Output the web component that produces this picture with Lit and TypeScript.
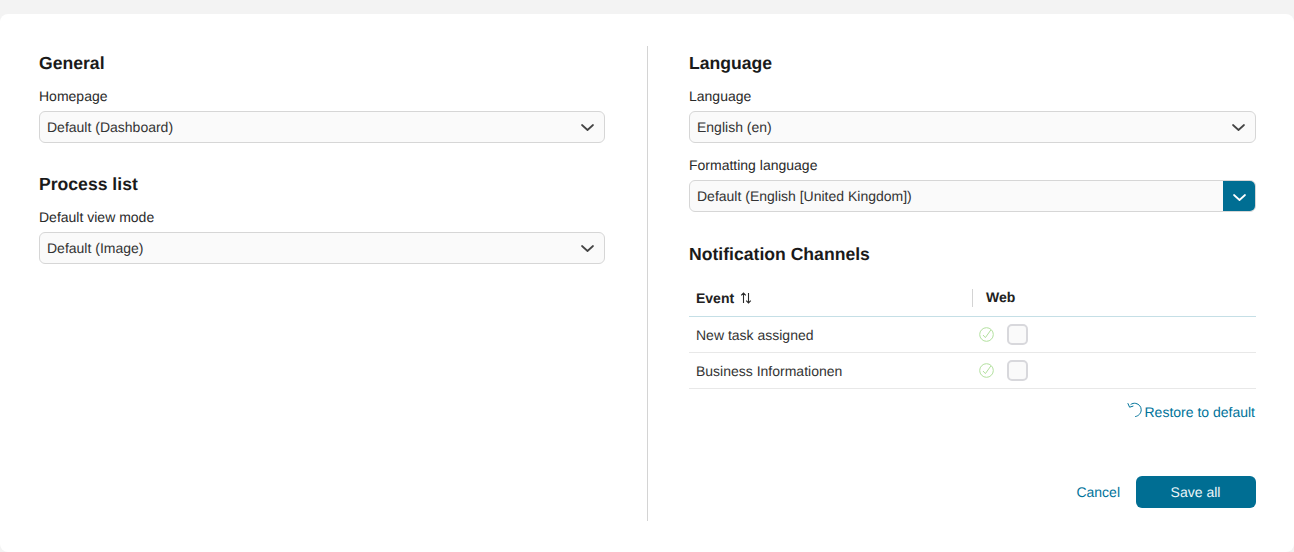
import { LitElement, html, css, svg } from "lit";
import { customElement } from "lit/decorators.js";

const chevron = svg`<path d="M1 1 L6.5 6 L12 1" fill="none" stroke="currentColor" stroke-width="1.7" stroke-linecap="round" stroke-linejoin="round"/>`;

@customElement("app-root")
export class AppRoot extends LitElement {
  static styles = css`
    :host { display: block; height: 552px; background: #f3f3f3; padding-top: 14px; box-sizing: border-box; overflow: hidden;
      font-family: "Liberation Sans", Arial, sans-serif; font-size: 14px; color: #1f1f1f; text-rendering: geometricPrecision; }
    * { box-sizing: border-box; }
    .card { height: 538px; background: #fff; border-radius: 8px; padding: 32px 38px 31px 39px; display: flex; }
    .divider { width: 1px; background: #d4d4d4; flex: none; }
    .right { flex: 1; padding-left: 41px; display: flex; flex-direction: column; min-width: 0; }
    .left { width: 608px; padding-right: 42px; flex: none; }
    h2 { margin: 0; font-size: 17.6px; line-height: 22px; font-weight: 700; color: #1a1a1a; padding-top: 6px; }
    label { display: block; margin-top: 12px; line-height: 20px; font-size: 14px; color: #2a2a2a; }
    .sel { margin-top: 5px; height: 32px; border: 1px solid #d6d6d6; border-radius: 6px; background: #fafafa;
      display: flex; align-items: center; padding-left: 7px; color: #333; }
    .sel span { flex: 1; }
    .sel svg { width: 13px; height: 7px; color: #444; margin-right: 10px; flex: none; }
    .combo { overflow: hidden; }
    .combo .btn { width: 33px; height: 32px; margin: -1px -1px -1px 0; background: #006e93; display: flex; align-items: center; justify-content: center; flex: none; }
    .combo .btn svg { color: #fff; margin: 2px 0 0; }
    .gap { height: 24px; }
    .gap2 { height: 25px; }
    table { width: 100%; border-collapse: collapse; margin-top: 11px; table-layout: fixed; }
    th { height: 40px; text-align: left; font-weight: 700; font-size: 14px; border-bottom: 1px solid #c5dfe6; padding: 4px 0 0; color: #222; }
    td { height: 36px; border-bottom: 1px solid #e8e8e8; padding: 0; color: #333; }
    td.c1 { padding-top: 1px; }
    .c1 { width: 283px; padding-left: 7px; }
    .event { display: flex; align-items: center; gap: 6px; }
    .event svg { width: 12px; height: 12px; flex: none; }
    .web { border-left: 1px solid #d4d4d4; padding-left: 13px; height: 18px; line-height: 17px; }
    .cellr { display: flex; align-items: center; padding-left: 7px; gap: 13px; }
    .ok { width: 15px; height: 15px; flex: none; margin-top: 1px; }
    .cb { width: 21px; height: 21px; border: 2px solid #d8d8dc; border-radius: 5px; background: #fafafa; flex: none; }
    .restore { margin-top: 13px; padding-right: 1px; display: flex; justify-content: flex-end; align-items: flex-start; color: #00739a; line-height: 20px; gap: 2px; }
    .restore svg { width: 15px; height: 16px; flex: none; }
    .actions { margin-top: auto; display: flex; justify-content: flex-end; align-items: center; gap: 16px; padding-bottom: 13px; }
    .cancel { color: #00739a; }
    .save { width: 120px; height: 32px; padding-right: 1px; background: #006e93; color: #eef6f9; border-radius: 6px; display: flex; align-items: center; justify-content: center; }
  `;

  render() {
    const row = (name: string) => html`<tr>
      <td class="c1">${name}</td>
      <td><div class="cellr">
        <svg class="ok" viewBox="0 0 15 15"><circle cx="7.5" cy="7.5" r="6.8" fill="none" stroke="#b2e09e" stroke-width="1"/><path d="M4 8 L6.4 10.6 L11.8 3" fill="none" stroke="#b2e09e" stroke-width="1"/></svg>
        <div class="cb"></div>
      </div></td>
    </tr>`;
    const chev = html`<svg viewBox="0 0 13 7">${chevron}</svg>`;
    return html`<div class="card">
      <div class="left">
        <h2>General</h2>
        <label>Homepage</label>
        <div class="sel"><span>Default (Dashboard)</span>${chev}</div>
        <div class="gap"></div>
        <h2>Process list</h2>
        <label>Default view mode</label>
        <div class="sel"><span>Default (Image)</span>${chev}</div>
      </div>
      <div class="divider"></div>
      <div class="right">
        <h2>Language</h2>
        <label>Language</label>
        <div class="sel"><span>English (en)</span>${chev}</div>
        <label>Formatting language</label>
        <div class="sel combo"><span>Default (English [United Kingdom])</span><div class="btn">${chev}</div></div>
        <div class="gap2"></div>
        <h2>Notification Channels</h2>
        <table>
          <thead><tr>
            <th class="c1"><div class="event">Event
              <svg viewBox="0 0 12 12"><path d="M3.5 11 V1 M1.2 3.3 L3.5 1 L5.8 3.3 M8.5 1 V11 M6.2 8.7 L8.5 11 L10.8 8.7" fill="none" stroke="#2a2a2a" stroke-width="1.1"/></svg>
            </div></th>
            <th><div class="web">Web</div></th>
          </tr></thead>
          <tbody>${row("New task assigned")}${row("Business Informationen")}</tbody>
        </table>
        <div class="restore">
          <svg viewBox="0 0 15 16"><path d="M3.6 2.6 C5 1.5 7 1 8.8 1.4 C12 2.1 14.2 4.6 14.2 7.8 C14.2 11.2 11.6 14 8.2 14.6 M0.8 1.2 L2.6 5.2 L6.4 4" fill="none" stroke="#00739a" stroke-width="1"/></svg>
          <span>Restore to default</span>
        </div>
        <div class="actions"><span class="cancel">Cancel</span><div class="save">Save all</div></div>
      </div>
    </div>`;
  }
}
